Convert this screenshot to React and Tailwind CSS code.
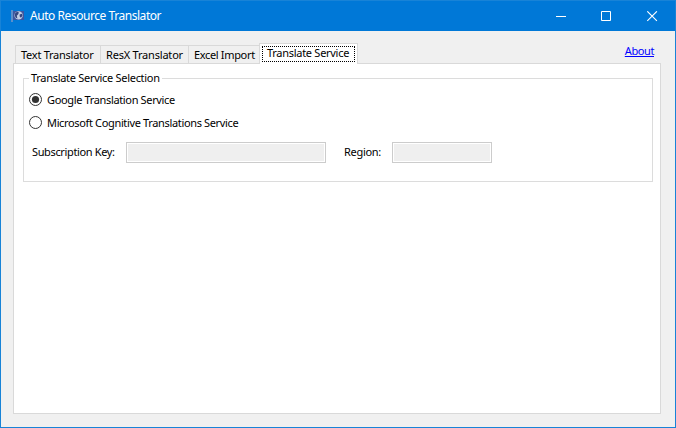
import React from 'react';

const tabs = [
  { label: 'Text Translator', cls: 'w-[85px] pl-[5px] tracking-[-0.25px]' },
  { label: 'ResX Translator', cls: 'w-[88px] pl-[5px] tracking-[-0.2px]' },
  { label: 'Excel Import', cls: 'w-[71px] pl-[5px] tracking-[-0.34px]' },
];

function AppIcon() {
  return (
    <svg width="14" height="12" viewBox="0 0 14 12" className="block">
      <rect x="0" y="0" width="2" height="12" fill="#5b8fcb" />
      <rect x="2" y="1" width="11" height="9" fill="#3d56a0" />
      <circle cx="7.6" cy="5.4" r="4.2" fill="#c3cfe6" />
      <path d="M4 3.4l2-1.6 1.8.5-.4 1.8-1.6 1.6.6 2.8-1.6-.8-1-2zM8.6 4.4l2.4-.6.5 2-1.6 2-1.2-1.4z" fill="#33467f" />
    </svg>
  );
}

function Radio({ checked, label }) {
  return (
    <label className="flex h-[23px] items-center tracking-[-0.35px]">
      <svg width="13" height="13" viewBox="0 0 13 13" className="mr-[5px] block">
        <circle cx="6.5" cy="6.5" r="6" fill="#fff" stroke="#333" />
        {checked && <circle cx="6.5" cy="6.5" r="3.6" fill="#333" />}
      </svg>
      <span>{label}</span>
    </label>
  );
}

function Field({ width }) {
  return (
    <div className={`h-[21px] border border-[#cccccc] bg-white p-px ${width}`}>
      <div className="h-full bg-[#efefef]" />
    </div>
  );
}

export default function App() {
  return (
    <div className="flex h-[428px] w-[676px] flex-col overflow-hidden whitespace-nowrap border border-[#1883d7] bg-[#f0f0f0] font-['Noto_Sans',sans-serif] text-[11px] leading-[14px] text-black">
      <header className="flex h-[30px] shrink-0 items-center bg-[#0078d7] pl-[10px] text-white">
        <AppIcon />
        <span className="ml-[5px] text-[12px] leading-[16px] tracking-[-0.45px]">Auto Resource Translator</span>
        <div className="ml-auto flex h-full items-center pr-[17px]">
          <svg width="102" height="11" viewBox="0 0 102 11" className="block" fill="none" stroke="#fff">
            <path d="M0 5.5h10M45.5.5h9v9h-9z" />
            <path d="M91.3.3l9.6 9.6M100.9.3l-9.6 9.6" strokeWidth="1.1" />
          </svg>
        </div>
      </header>

      <div className="flex h-[32px] shrink-0 items-end pl-[14px]">
        {tabs.map((t) => (
          <div key={t.label} className={`flex h-[18px] items-center border-l border-t border-[#d9d9d9] pt-px ${t.cls}`}>
            {t.label}
          </div>
        ))}
        <div className="relative z-10 -mb-px h-[21px] w-[99px] border border-b-0 border-[#d9d9d9] bg-white pl-[2px] pt-[2px]">
          <div className="flex h-[16px] w-[93px] items-center border border-dotted border-black pb-[2px] pl-[4px] tracking-[-0.28px]">
            Translate Service
          </div>
        </div>
        <a className="mb-[5px] ml-auto mr-[21px] tracking-[-0.4px] text-[#0000ff] underline">About</a>
      </div>

      <main className="ml-[12px] h-[351px] w-[648px] shrink-0 border border-[#d9d9d9] bg-white pl-[9px] pt-[7px]">
        <section className="flex h-[111px] w-[630px] flex-col">
          <div className="flex h-[14px] items-center">
            <div className="mt-px h-px w-[6px] bg-[#dcdcdc]" />
            <h2 className="px-[2px] tracking-[-0.29px]">Translate Service Selection</h2>
            <div className="mt-px h-px flex-1 bg-[#dcdcdc]" />
          </div>
          <div className="-mt-[7px] flex-1 border border-t-0 border-[#dcdcdc] pl-[5px] pt-[10px]">
            <Radio checked label="Google Translation Service" />
            <Radio label="Microsoft Cognitive Translations Service" />
            <div className="mt-[8px] flex items-center pl-[3px]">
              <span className="w-[94px] pb-px tracking-[-0.36px]">Subscription Key:</span>
              <Field width="w-[200px]" />
              <span className="ml-[18px] w-[48px] pb-px tracking-[-0.3px]">Region:</span>
              <Field width="w-[100px]" />
            </div>
          </div>
        </section>
      </main>
    </div>
  );
}
